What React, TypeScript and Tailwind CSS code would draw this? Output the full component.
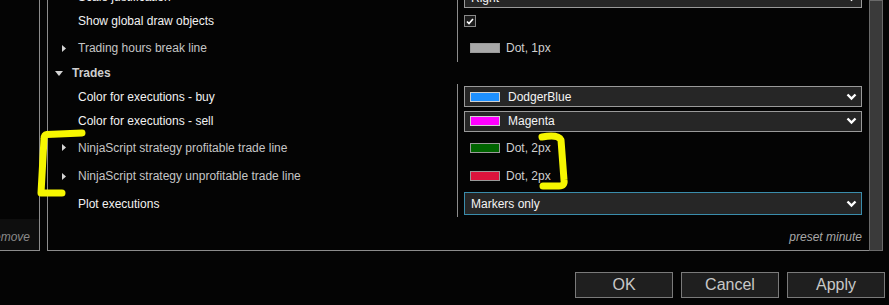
import React from "react";

const RightTri = () => (
  <svg width="4" height="7" viewBox="0 0 4 7" className="block">
    <path d="M0 0 L4 3.5 L0 7 Z" fill="#d4d4d4" />
  </svg>
);

const DownTri = () => (
  <svg width="8" height="5" viewBox="0 0 8 5" className="block">
    <path d="M0 0 L8 0 L4 5 Z" fill="#d4d4d4" />
  </svg>
);

const Chevron = () => (
  <svg width="11" height="8" viewBox="0 0 11 8" className="block">
    <polyline points="1.5,1.5 5.5,5.5 9.5,1.5" fill="none" stroke="#ffffff" strokeWidth="2.4" />
  </svg>
);

function Dropdown({
  text,
  swatch,
  focused,
}: {
  text: string;
  swatch?: string;
  focused?: boolean;
}) {
  return (
    <div
      className={
        "flex items-center w-full bg-[#262626] border " +
        (focused ? "border-[#3a8cab] h-[23px]" : "border-[#9a9a9a] h-[21px]")
      }
    >
      {swatch ? (
        <>
          <div
            className="ml-[5px] w-[30px] h-[10px] border border-[#d0d0d0]"
            style={{ backgroundColor: swatch }}
          />
          <span className="ml-[8px] text-[#f4f4f4]">{text}</span>
        </>
      ) : (
        <span className="ml-[6px] text-[#f4f4f4]">{text}</span>
      )}
      <div className="ml-auto mr-[4px]">
        <Chevron />
      </div>
    </div>
  );
}

function Swatch({ color, text }: { color: string; text: string }) {
  return (
    <div className="flex items-center pl-[12px]">
      <div className="w-[30px] h-[10px] border border-[#9a9a9a]" style={{ backgroundColor: color }} />
      <span className="ml-[6px] text-[#d0d0d0]">{text}</span>
    </div>
  );
}

export default function App() {
  return (
    <div className="relative w-[889px] h-[305px] overflow-hidden bg-[#040404] font-['Liberation_Sans',Arial,sans-serif] text-[12px] leading-[14px]">
      <div className="flex h-[251px]">
        {/* left panel */}
        <div className="w-[40px] flex flex-col border-r border-b border-[#8c8c8c]">
          <div className="flex-1" />
          <div className="h-[31px] bg-[#0e0e0e] flex items-end justify-end pr-[9px] pb-[6px] overflow-hidden">
            <span className="italic text-[#8a8a8a] whitespace-nowrap">remove</span>
          </div>
        </div>

        {/* main panel */}
        <div className="ml-[7px] mr-[6px] flex-1 flex">
          <div className="flex-1 flex flex-col border-l border-b border-[#8c8c8c] overflow-hidden">
            <div className="-mt-[14px] flex flex-col">
              {/* Scale justification */}
              <div className="flex h-[22px]">
                <div className="w-[409px] flex items-center pl-[30px] text-[#f2f2f2]">Scale justification</div>
                <div className="flex-1 border-l border-[#8c8c8c] pl-[6px] pr-[7px] flex items-end">
                  <Dropdown text="Right" />
                </div>
              </div>
              {/* Show global draw objects */}
              <div className="flex h-[26px]">
                <div className="w-[409px] flex items-center pl-[30px] text-[#f2f2f2]">Show global draw objects</div>
                <div className="flex-1 border-l border-[#8c8c8c] pl-[6px] flex items-center">
                  <div className="w-[12px] h-[12px] border border-[#8a8a8a] bg-[#1c1c1c] flex items-center justify-center">
                    <svg width="8" height="7" viewBox="0 0 8 7" className="block">
                      <polyline points="1,3.5 3,5.5 7,1" fill="none" stroke="#ffffff" strokeWidth="1.6" />
                    </svg>
                  </div>
                </div>
              </div>
              {/* Trading hours break line */}
              <div className="flex h-[28px]">
                <div className="w-[409px] flex items-center pl-[14px] text-[#c6c6c6]">
                  <div className="w-[16px]">
                    <RightTri />
                  </div>
                  <span>Trading hours break line</span>
                </div>
                <div className="flex-1 border-l border-[#8c8c8c] flex items-center">
                  <Swatch color="#a9a9a9" text="Dot, 1px" />
                </div>
              </div>
              {/* Trades category */}
              <div className="flex h-[22px] items-center pl-[7px]">
                <div className="w-[17px]">
                  <DownTri />
                </div>
                <span className="font-bold text-[#cfcfcf]">Trades</span>
              </div>
              {/* buy */}
              <div className="flex h-[25px]">
                <div className="w-[409px] flex items-center pl-[30px] text-[#f2f2f2]">Color for executions - buy</div>
                <div className="flex-1 border-l border-[#8c8c8c] pl-[6px] pr-[7px] flex items-center">
                  <Dropdown text="DodgerBlue" swatch="#1e90ff" />
                </div>
              </div>
              {/* sell */}
              <div className="flex h-[24px]">
                <div className="w-[409px] flex items-center pl-[30px] text-[#f2f2f2]">Color for executions - sell</div>
                <div className="flex-1 border-l border-[#8c8c8c] pl-[6px] pr-[7px] flex items-center">
                  <Dropdown text="Magenta" swatch="#ff00ff" />
                </div>
              </div>
              {/* profitable */}
              <div className="flex h-[29px]">
                <div className="w-[409px] flex items-center pl-[14px] text-[#c6c6c6]">
                  <div className="w-[16px]">
                    <RightTri />
                  </div>
                  <span>NinjaScript strategy profitable trade line</span>
                </div>
                <div className="flex-1 border-l border-[#8c8c8c] flex items-center">
                  <Swatch color="#006400" text="Dot, 2px" />
                </div>
              </div>
              {/* unprofitable */}
              <div className="flex h-[28px]">
                <div className="w-[409px] flex items-center pl-[14px] text-[#c6c6c6]">
                  <div className="w-[16px]">
                    <RightTri />
                  </div>
                  <span>NinjaScript strategy unprofitable trade line</span>
                </div>
                <div className="flex-1 border-l border-[#8c8c8c] flex items-center">
                  <Swatch color="#dc143c" text="Dot, 2px" />
                </div>
              </div>
              {/* plot executions */}
              <div className="flex h-[27px]">
                <div className="w-[409px] flex items-center pl-[30px] text-[#f2f2f2]">Plot executions</div>
                <div className="flex-1 border-l border-[#8c8c8c] pl-[6px] pr-[7px] flex items-center">
                  <Dropdown text="Markers only" focused />
                </div>
              </div>
            </div>
            <div className="flex-1 flex items-start justify-end pr-[7px] pt-[13px]">
              <span className="italic text-[#a8a8a8]">preset minute</span>
            </div>
          </div>
          <div className="w-[14px] border border-[#6a6a6a] bg-[#3a3a3a]" />
        </div>
      </div>

      {/* buttons */}
      <div className="flex justify-end gap-[8px] pr-[4px] mt-[21px]">
        {["OK", "Cancel", "Apply"].map((b) => (
          <div
            key={b}
            className="w-[98px] h-[26px] border border-[#7a7a7a] bg-[#1f1f1f] flex items-center justify-center text-[16px] leading-[18px] text-[#c8c8c8]"
          >
            {b}
          </div>
        ))}
      </div>

      {/* yellow annotations */}
      <svg
        className="absolute left-0 top-0 pointer-events-none"
        width="889"
        height="305"
        viewBox="0 0 889 305"
      >
        <path
          d="M82 133 L47 134.5 Q44 135 44 139 L41 193 L62 193"
          fill="none"
          stroke="#f6f600"
          strokeWidth="7"
          strokeLinecap="round"
          strokeLinejoin="round"
        />
        <path
          d="M542 137 Q558 134 561 140 L564 180 Q565 186 559 186 L543 186"
          fill="none"
          stroke="#f6f600"
          strokeWidth="7"
          strokeLinecap="round"
          strokeLinejoin="round"
        />
      </svg>
    </div>
  );
}
